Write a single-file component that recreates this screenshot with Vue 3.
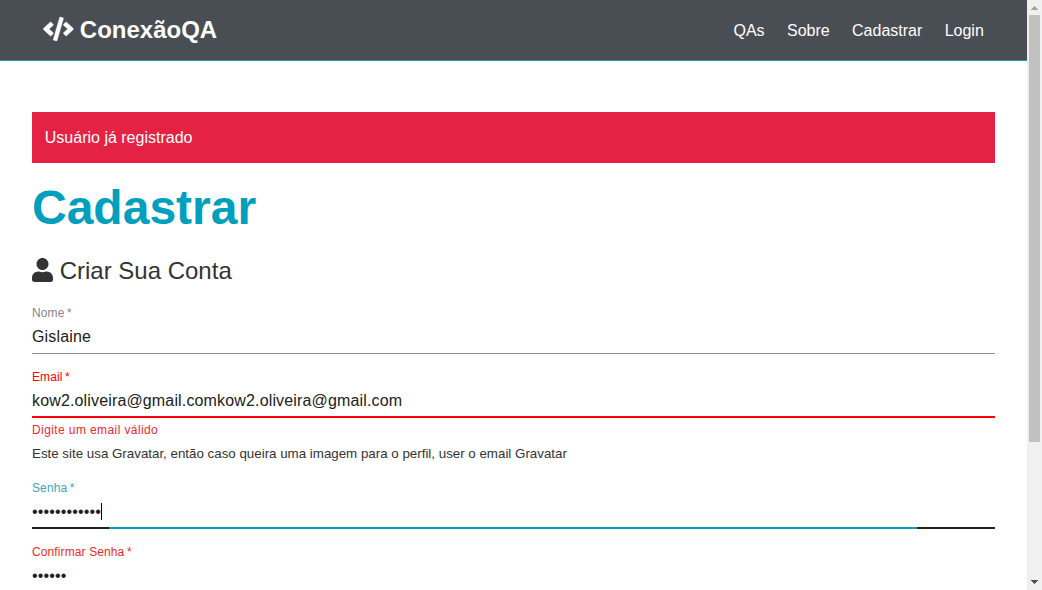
<script setup>
const links = ['QAs', 'Sobre', 'Cadastrar', 'Login']
</script>

<template>
  <div class="screen">
    <div class="page">
      <nav class="navbar">
        <h1 class="brand">
          <svg class="code-icon" viewBox="-8 0 640 512">
            <path fill="currentColor" stroke="currentColor" stroke-width="6" d="M278.9 511.5l-61-17.7c-6.4-1.8-10-8.5-8.2-14.9L346.2 8.7c1.8-6.4 8.5-10 14.9-8.2l61 17.7c6.4 1.8 10 8.5 8.2 14.9L293.8 503.3c-1.9 6.4-8.5 10.1-14.9 8.2z" />
            <path fill="currentColor" stroke="currentColor" stroke-width="14" d="M164.9 399.3l43.5-46.4c4.6-4.9 4.3-12.7-.8-17.2L117 256l90.6-79.7c5.1-4.5 5.5-12.3.8-17.2l-43.5-46.4c-4.5-4.8-12.1-5.1-17-.5L3.8 247.2c-5.1 4.7-5.1 12.8 0 17.5l144.1 135.1c4.9 4.6 12.5 4.4 17-.5zM492.1 399.9l144.1-135.1c5.1-4.7 5.1-12.8 0-17.5L492.1 112.1c-4.8-4.5-12.4-4.3-17 .5L431.6 159c-4.6 4.9-4.3 12.7.8 17.2L523 256l-90.6 79.7c-5.1 4.5-5.5 12.3-.8 17.2l43.5 46.4c4.5 4.9 12.1 5.1 17 .6z" />
          </svg>
          <span>ConexãoQA</span>
        </h1>
        <ul class="links">
          <li v-for="link in links" :key="link">{{ link }}</li>
        </ul>
      </nav>

      <main class="container">
        <div class="alert">Usuário já registrado</div>
        <h1 class="title">Cadastrar</h1>
        <p class="lead">
          <svg class="user-icon" viewBox="0 0 448 512"><path fill="currentColor" d="M224 256c70.7 0 128-57.3 128-128S294.7 0 224 0 96 57.3 96 128s57.3 128 128 128zm89.6 32h-16.7c-22.2 10.2-46.9 16-72.9 16s-50.6-5.8-72.9-16h-16.7C60.2 288 0 348.2 0 422.4V464c0 26.5 21.5 48 48 48h352c26.5 0 48-21.5 48-48v-41.6c0-74.2-60.2-134.4-134.4-134.4z" /></svg>
          <span>Criar Sua Conta</span>
        </p>

        <div class="field">
          <div class="label">Nome *</div>
          <div class="value">Gislaine</div>
          <div class="line"></div>
        </div>

        <div class="field email">
          <div class="label error">Email *</div>
          <div class="value">kow2.oliveira@gmail.comkow2.oliveira@gmail.com</div>
          <div class="line red"></div>
        </div>
        <p class="helper">Digite um email válido</p>
        <small class="hint">Este site usa Gravatar, então caso queira uma imagem para o perfil, user o email Gravatar</small>

        <div class="field">
          <div class="label focused">Senha *</div>
          <div class="value">••••••••••••<i class="caret"></i></div>
          <div class="line dark"><div class="progress"></div></div>
        </div>

        <div class="field">
          <div class="label invalid">Confirmar Senha<span class="star"> *</span></div>
          <div class="value">••••••</div>
          <div class="line"></div>
        </div>
      </main>
    </div>

    <div class="scrollbar">
      <svg class="arrow" viewBox="0 0 15 15" shape-rendering="crispEdges"><path fill="#a3a3a3" d="M7 6h1v1h1v1h1v1h1v1H4V9h1V8h1V7h1z" /></svg>
      <div class="thumb"></div>
      <svg class="arrow" viewBox="0 0 15 15" shape-rendering="crispEdges"><path fill="#505050" d="M4 5h7v1h-1v1H9v1H8v1H7V8H6V7H5V6H4z" /></svg>
    </div>
  </div>
</template>

<style>
body {
  margin: 0;
  overflow: hidden;
}
</style>

<style scoped>
* {
  box-sizing: border-box;
}
.screen {
  display: flex;
  width: 1042px;
  height: 590px;
  overflow: hidden;
  background: #fff;
  color: #333;
  font-family: "Liberation Sans", Arial, sans-serif;
  font-size: 16px;
}
.page {
  width: 1027px;
  height: 590px;
  overflow: hidden;
}
.navbar {
  display: flex;
  justify-content: space-between;
  align-items: center;
  height: 61px;
  padding: 0 32px;
  border-bottom: 1px solid #17a2b8;
  background: #494d54;
  color: #fff;
}
.brand {
  display: flex;
  align-items: center;
  gap: 6.8px;
  margin: 0 0 0 11px;
  font-size: 24px;
  line-height: 38px;
}
.code-icon {
  width: 30px;
  height: 24px;
  margin-top: -2px;
  overflow: visible;
}
.links {
  display: flex;
  margin: 2px 0 0;
  padding: 0;
  list-style: none;
  line-height: 26px;
}
.links li {
  padding: 0 7.2px;
  margin: 0 4px;
}
.container {
  padding: 51px 32px 0;
}
.alert {
  height: 51px;
  padding: 0 12.8px;
  background: #e52244;
  color: #fff;
  line-height: 51px;
}
.title {
  margin: 16px 0;
  color: #009fbd;
  font-size: 48px;
  line-height: 58px;
}
.lead {
  display: flex;
  align-items: center;
  gap: 6.67px;
  height: 38px;
  margin: 0 0 15px;
  font-size: 24px;
}
.user-icon {
  width: 21px;
  height: 24px;
  margin-top: -4px;
}
.lead span {
  margin-top: -2px;
}
.field {
  position: relative;
  height: 48px;
  margin-bottom: 16px;
  padding-top: 21px;
}
.field.email {
  margin-bottom: 3px;
}
.label {
  position: absolute;
  top: 0.5px;
  left: 0;
  color: #858585;
  letter-spacing: 0.15px;
  line-height: 16px;
  word-spacing: -1.2px;
  transform: scale(0.75);
  transform-origin: top left;
}
.label.error {
  color: #f00;
}
.label.focused {
  color: #3fa5bc;
}
.label.invalid {
  color: #ee2a2a;
  word-spacing: 0;
}
.star {
  word-spacing: -1.2px;
}
.value {
  display: flex;
  height: 19px;
  color: #212121;
  letter-spacing: 0.15px;
  line-height: 19px;
}
.caret {
  width: 1px;
  height: 17px;
  margin-top: 1px;
  background: #000;
}
.line {
  position: absolute;
  right: 0;
  bottom: 0;
  left: 0;
  height: 1px;
  background: #8c8c8c;
}
.line.red {
  height: 2px;
  background: #f00;
}
.line.dark {
  height: 2px;
  background: #212121;
}
.progress {
  width: 808px;
  height: 2px;
  margin-left: 77px;
  background: #00a0bc;
}
.helper {
  height: 20px;
  margin: 0;
  color: #f3262c;
  font-size: 12px;
  letter-spacing: 0.4px;
  line-height: 18px;
}
.hint {
  display: block;
  height: 25px;
  margin-bottom: 15px;
  font-size: 13.333px;
  line-height: 25px;
}
.scrollbar {
  display: flex;
  flex-direction: column;
  width: 15px;
  height: 590px;
  background: #f0f0f0;
}
.arrow {
  width: 15px;
  height: 15px;
}
.thumb {
  width: 11px;
  height: 427px;
  margin: 0 0 133px 2px;
  background: #c1c1c1;
}
</style>
